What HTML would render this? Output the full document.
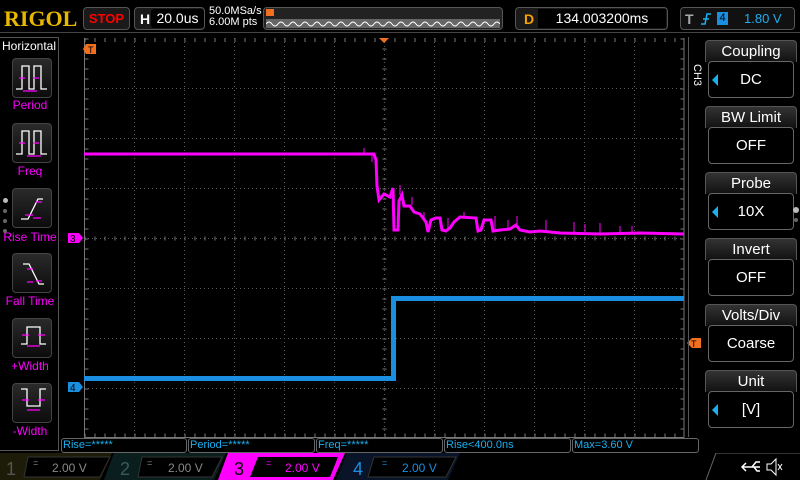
<!DOCTYPE html>
<html><head><meta charset="utf-8"><style>
*{margin:0;padding:0;box-sizing:border-box}
body{width:800px;height:480px;background:#000;overflow:hidden;position:relative;font-family:"Liberation Sans",sans-serif;color:#fff}
.a{position:absolute}
.box{position:absolute;border:1px solid #555;border-radius:4px;background:#0a0a0a}
.btn{position:absolute;left:12px;width:40px;height:40px;border:1px solid #444;border-radius:4px;background:linear-gradient(#2a2a2a,#0c0c0c)}
.lbl{position:absolute;left:0;width:60px;text-align:center;color:#f0f;font-size:12px}
.rh{position:absolute;left:705px;width:92px;height:22px;text-align:center;font-size:15px;border:1px solid #555;border-bottom:none;border-radius:4px 4px 0 0;background:linear-gradient(#333,#111);line-height:21px}
.rv{position:absolute;left:708px;width:86px;height:37px;border:1px solid #666;border-radius:4px;text-align:center;font-size:15px;line-height:36px}
.tri{position:absolute;left:3px;top:12px;width:0;height:0;border-top:6px solid transparent;border-bottom:6px solid transparent;border-right:6px solid #1ab0f0}
.m{position:absolute;top:438px;height:15px;border:1px solid #666;border-radius:3px;font-size:11px;color:#1ab0f0;line-height:13px;padding-left:1px}
</style></head><body>
<div class="a" style="left:4px;top:6px;font-family:'Liberation Serif',serif;font-weight:bold;font-size:22px;color:#e8b800">RIGOL</div>
<div class="box" style="left:83px;top:7px;width:47px;height:23px;color:#f00;font-weight:bold;font-size:13px;text-align:center;line-height:21px;background:#1a1a1a">STOP</div>
<div class="box" style="left:134px;top:7px;width:71px;height:23px;background:#1a1a1a"><span class="a" style="left:5px;top:3px;font-weight:bold;font-size:14px">H</span><div class="a" style="left:16px;top:1px;width:53px;height:19px;background:#000;border-radius:3px;font-size:14px;text-align:center;line-height:19px">20.0us</div></div>
<div class="a" style="left:209px;top:6px;font-size:11px;line-height:11px">50.0MSa/s<br>6.00M pts</div>
<div class="box" style="left:263px;top:7px;width:240px;height:23px;background:#222">
<div class="a" style="left:2px;top:1px;width:8px;height:7px;background:#f07020"></div>
<div class="a" style="left:2px;top:11px;width:234px;height:9px;background:#666"></div>
<svg class="a" style="left:2px;top:11px" width="234" height="9"><path d="M0 5 q3-4 6 0 t6 0 t6 0 t6 0 t6 0 t6 0 t6 0 t6 0 t6 0 t6 0 t6 0 t6 0 t6 0 t6 0 t6 0 t6 0 t6 0 t6 0 t6 0 t6 0 t6 0 t6 0 t6 0 t6 0 t6 0 t6 0 t6 0 t6 0 t6 0 t6 0 t6 0 t6 0 t6 0 t6 0 t6 0 t6 0 t6 0 t6 0 t6 0" stroke="#fff" fill="none"/></svg></div>
<div class="box" style="left:515px;top:7px;width:153px;height:23px;background:#1a1a1a"><span class="a" style="left:8px;top:3px;font-weight:bold;font-size:14px;color:#f7a000">D</span><div class="a" style="left:22px;top:1px;width:128px;height:19px;background:#000;font-size:14px;text-align:center;line-height:19px">134.003200ms</div></div>
<div class="box" style="left:680px;top:7px;width:115px;height:23px;background:#111"><span class="a" style="left:4px;top:3px;font-weight:bold;font-size:14px;color:#aaa">T</span>
<svg class="a" style="left:19px;top:4px" width="12" height="14"><path d="M1 12h4l2-10h4M3 7h6" stroke="#1ab0f0" stroke-width="1.5" fill="none"/></svg>
<div class="a" style="left:36px;top:4px;width:11px;height:13px;background:#1a8ee0;color:#000;font-size:11px;text-align:center;line-height:13px">4</div><span class="a" style="left:63px;top:3px;font-size:13px;color:#1ab0f0">1.80 V</span></div>
<div class="a" style="left:0;top:32px;width:800px;height:1px;background:#444"></div>
<div class="a" style="left:0;top:37px;width:59px;height:414px;border:1px solid #555;border-left:none"></div>
<div class="a" style="left:2px;top:39px;font-size:12px">Horizontal</div>
<div class="btn" style="top:58px"></div><div class="btn" style="top:123px"></div><div class="btn" style="top:188px"></div><div class="btn" style="top:253px"></div><div class="btn" style="top:318px"></div><div class="btn" style="top:383px"></div>
<svg class="a" style="left:0;top:0" width="60" height="440" fill="none" stroke-width="1.3">
<g stroke="#fff"><path d="M16 89 h6 v-23 h7 v23 h5 v-23 h7 v23 h6"/><path d="M16 154 h6 v-23 h7 v23 h5 v-23 h7 v23 h6"/><path d="M21 219 h7 l10-20 h5"/><path d="M23 264 h6 l10 20 h5"/><path d="M21 344 h6 v-17 h13 v17 h6"/><path d="M21 389 h6 v17 h13 v-17 h6"/></g>
<g stroke="#f0f"><path d="M19 78 h6 M33 78 h6 M23 91 h14"/><path d="M19 143 h6 M33 143 h6 M27 156 h14"/><path d="M25 215 h8 M36 202 h6 M33 218 h8"/><path d="M27 269 h6 M36 281 h6 M27 282 h6"/><path d="M22 335 h7 M38 335 h7 M27 346 h13"/><path d="M22 400 h7 M38 400 h7 M27 410 h13"/></g></svg>
<div class="lbl" style="top:98px">Period</div><div class="lbl" style="top:164px">Freq</div><div class="lbl" style="top:230px">Rise Time</div><div class="lbl" style="top:294px">Fall Time</div><div class="lbl" style="top:359px">+Width</div><div class="lbl" style="top:424px">-Width</div>
<div class="a" style="left:3px;top:198px;width:5px;height:5px;border-radius:50%;background:#bbb"></div>
<div class="a" style="left:3px;top:209px;width:4px;height:4px;border-radius:50%;background:#666"></div>
<div class="a" style="left:3px;top:219px;width:4px;height:4px;border-radius:50%;background:#666"></div>
<div class="a" style="left:3px;top:229px;width:4px;height:4px;border-radius:50%;background:#666"></div>
<svg class="a" style="left:0;top:0" width="800" height="480">
<g stroke="#5a5a5a" stroke-width="1" stroke-dasharray="1,3">
<path d="M134.5 38v400M184.5 38v400M234.5 38v400M284.5 38v400M334.5 38v400M434.5 38v400M484.5 38v400M534.5 38v400M584.5 38v400M634.5 38v400M384.5 38v400"/>
<path d="M84 88.5h600M84 138.5h600M84 188.5h600M84 288.5h600M84 338.5h600M84 388.5h600M84 238.5h600"/></g>
<path d="M84.5 38v399.5h599.5V38" stroke="#777" fill="none"/>
<g stroke="#777" stroke-dasharray="1,9" stroke-width="4">
<path d="M84.5 40h600M84.5 435.5h600M84.5 238.5h600" />
<path d="M86.5 38.5v400M682.5 38.5v400M384.5 38.5v400"/></g>
<path d="M84 154H374L376 160L377 186L379 200L384 194L390 197L393 188L394 230L398 230L399 201L402 195L404 206L410 206L414 212L420 214L426 222L428 232L431 220L436 218L440 218L442 230L446 231L450 228L454 222L460 217L476 218L478 231L481 230L484 220L491 220L493 231L500 230L510 229L516 225L520 230L530 232L540 231L560 233L600 234L640 233L684 234" stroke="#f0f" stroke-width="3" fill="none"/>
<g stroke="#f0f" stroke-width="1"><path d="M400 195v-10M412 205v-8M424 222v-10M448 228v-10M464 218v-6M495 230v-14M508 230v-10M517 226v-10M546 232v-12M574 232v-10M585 232v-8M600 233v-10M620 234v-8M632 234v-8M364 154v-6M372 154v8"/></g>
<path d="M84 378.5H393.5V298.5H684" stroke="#1a8ee0" stroke-width="5" fill="none"/>
<path d="M86 44h10v10h-10l-3-5z" fill="#f07020"/><text x="88" y="53" font-size="9" fill="#000" font-family="Liberation Sans">T</text>
<path d="M379 38h10l-5 5z" fill="#f07020"/>
<path d="M68 233h11l4 5l-4 5h-11z" fill="#f0f"/><text x="70" y="242" font-size="10" fill="#000" font-family="Liberation Sans">3</text>
<path d="M68 382h11l4 5l-4 5h-11z" fill="#1a8ee0"/><text x="70" y="391" font-size="10" fill="#000" font-family="Liberation Sans">4</text>
<path d="M687 343l5-5h9v10h-9z" fill="#f07020"/><text x="691" y="347" font-size="9" fill="#000" font-family="Liberation Sans">T</text>
</svg>
<div class="a" style="left:688px;top:37px;width:112px;height:400px;border-left:1px solid #555"></div>
<div class="a" style="top:64px;font-size:11px;transform:rotate(90deg);transform-origin:left top;left:703px">CH3</div>
<div class="rh" style="top:40px">Coupling</div><div class="rv" style="top:61px"><div class="tri"></div>DC</div>
<div class="rh" style="top:106px">BW Limit</div><div class="rv" style="top:127px">OFF</div>
<div class="rh" style="top:172px">Probe</div><div class="rv" style="top:193px"><div class="tri"></div>10X</div>
<div class="rh" style="top:238px">Invert</div><div class="rv" style="top:259px">OFF</div>
<div class="rh" style="top:304px">Volts/Div</div><div class="rv" style="top:325px">Coarse</div>
<div class="rh" style="top:370px">Unit</div><div class="rv" style="top:391px"><div class="tri"></div>[V]</div>
<div class="a" style="left:793px;top:207px;width:6px;height:6px;border-radius:50%;background:#bbb"></div>
<div class="a" style="left:794px;top:218px;width:4px;height:4px;border-radius:50%;background:#666"></div>
<div class="m" style="left:61px;width:126px">Rise=*****</div>
<div class="m" style="left:188px;width:127px">Period=*****</div>
<div class="m" style="left:316px;width:127px">Freq=*****</div>
<div class="m" style="left:444px;width:127px">Rise&lt;400.0ns</div>
<div class="m" style="left:572px;width:127px">Max=3.60 V</div>
<svg class="a" style="left:0;top:453px" width="800" height="27">
<path d="M0 0H112L100 27H0z" fill="#1c1c08"/><path d="M28 4H110L100 24H24z" fill="#000" stroke="#333"/>
<path d="M114 0H226L214 27H104z" fill="#0a1e1e"/><path d="M142 4H222L212 24H138z" fill="#000" stroke="#333"/>
<path d="M228 0H345L333 27H218z" fill="#f0f"/><path d="M258 4H338L330 24H250z" fill="#000"/>
<path d="M347 0H460L448 27H336z" fill="#0a1428"/><path d="M374 4H456L446 24H368z" fill="#000" stroke="#333"/>
<path d="M706 27L716 0H800" stroke="#666" fill="none"/>
<g font-family="Liberation Sans" font-size="18"><text x="6" y="22" fill="#555">1</text><text x="120" y="22" fill="#3a5a5a">2</text><text x="234" y="22" fill="#000">3</text><text x="353" y="22" fill="#1a8ee0">4</text></g>
<g font-family="Liberation Sans" font-size="12"><text x="52" y="19" fill="#888">2.00 V</text><text x="168" y="19" fill="#888">2.00 V</text><text x="285" y="19" fill="#f0f">2.00 V</text><text x="402" y="19" fill="#1a8ee0">2.00 V</text></g>
<g font-size="9" font-family="Liberation Sans"><text x="33" y="13" fill="#888">=</text><text x="147" y="13" fill="#888">=</text><text x="266" y="13" fill="#f0f">=</text><text x="382" y="13" fill="#1a8ee0">=</text></g>
<path d="M742 14h18M746 10l-4 4 4 4M752 14l4-5h4M754 14l3 4h3" stroke="#fff" fill="none" stroke-width="1.5"/>
<path d="M767 11h4l5-5v16l-5-5h-4z" stroke="#fff" fill="none"/><path d="M778 11l4 6M782 11l-4 6" stroke="#fff"/>
</svg>
</body></html>
